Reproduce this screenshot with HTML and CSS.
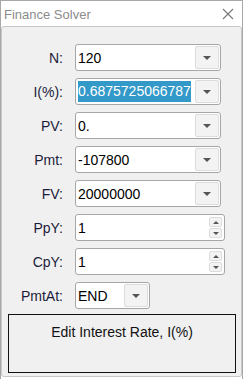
FILE: index.html
```html
<!DOCTYPE html>
<html>
<head>
<meta charset="utf-8">
<link rel="stylesheet" href="styles.css">
</head>
<body>
<div class="window">
  <div class="titlebar">
    <span class="title">Finance Solver</span>
    <svg class="close" width="12" height="12" viewBox="0 0 12 12"><path d="M1 1L11 11M11 1L1 11" stroke="#777" stroke-width="1.1" fill="none"/></svg>
  </div>
  <div class="panel">
    <div class="form">
      <label class="lbl">N:</label>
      <div class="combo"><span class="val">120</span><span class="btn"><i class="tri"></i></span></div>
      <label class="lbl">I(%):</label>
      <div class="combo"><span class="val"><span class="sel">0.6875725066787</span></span><span class="btn"><i class="tri"></i></span></div>
      <label class="lbl">PV:</label>
      <div class="combo"><span class="val">0.</span><span class="btn"><i class="tri"></i></span></div>
      <label class="lbl">Pmt:</label>
      <div class="combo"><span class="val">-107800</span><span class="btn"><i class="tri"></i></span></div>
      <label class="lbl">FV:</label>
      <div class="combo"><span class="val">20000000</span><span class="btn"><i class="tri"></i></span></div>
      <label class="lbl">PpY:</label>
      <div class="spin"><span class="val">1</span><span class="arrows"><span class="ab"><i class="up"></i></span><span class="ab"><i class="tri"></i></span></span></div>
      <label class="lbl">CpY:</label>
      <div class="spin"><span class="val">1</span><span class="arrows"><span class="ab"><i class="up"></i></span><span class="ab"><i class="tri"></i></span></span></div>
      <label class="lbl">PmtAt:</label>
      <div class="combo small"><span class="val">END</span><span class="btn"><i class="tri"></i></span></div>
    </div>
    <div class="status">Edit Interest Rate, I(%)</div>
  </div>
</div>
</body>
</html>
```
FILE: styles.css
```css
html, body {
  margin: 0;
  padding: 0;
  background: #ffffff;
}
body {
  font-family: "Liberation Sans", Arial, sans-serif;
  font-size: 14px;
  color: #000;
}
.window {
  width: 243px;
  height: 379px;
  box-sizing: border-box;
  border-top: 1px solid #a8a8a8;
  border-left: 1px solid #a8a8a8;
  border-right: 1px solid #a8a8a8;
  display: flex;
  flex-direction: column;
}
.titlebar {
  height: 25px;
  display: flex;
  align-items: center;
  justify-content: space-between;
  padding: 0 8px 0 3px;
  flex: none;
}
.title {
  color: #8c8c8c;
  font-size: 13px;
  padding-top: 1px;
}
.close {
  display: block;
  margin-top: 1px;
}
.panel {
  background: #f0f0f0;
  border: 1px solid #c8c8c8;
  border-radius: 3px;
  margin: 0 0 2px 0;
  height: 351px;
  box-sizing: border-box;
  padding: 17px 5px 3px 6px;
  display: flex;
  flex-direction: column;
}
.form {
  display: grid;
  grid-template-columns: 55px auto;
  column-gap: 12px;
  row-gap: 7px;
  align-items: center;
  justify-items: start;
}
.lbl {
  justify-self: end;
  color: #1c1c3a;
}
.combo, .spin {
  height: 27px;
  box-sizing: border-box;
  border: 1px solid #a6a6a6;
  border-radius: 3px;
  background: #fff;
  display: flex;
  align-items: stretch;
  width: 146px;
}
.spin {
  width: 150px;
}
.combo.small {
  width: 75px;
}
.val {
  flex: 1;
  display: flex;
  align-items: center;
  padding-left: 2px;
  overflow: hidden;
  white-space: nowrap;
}
.sel {
  background: #3399c9;
  color: #fff;
  height: 21px;
  line-height: 21px;
  display: block;
}
.btn {
  width: 22px;
  margin: 1px 1px 1px 0;
  background: #f3f3f3;
  border: 1px solid #dcdcdc;
  border-radius: 2px;
  display: flex;
  align-items: center;
  justify-content: center;
}
.tri {
  width: 0;
  height: 0;
  border-left: 4px solid transparent;
  border-right: 4px solid transparent;
  border-top: 4px solid #555;
}
.up {
  width: 0;
  height: 0;
  border-left: 3px solid transparent;
  border-right: 3px solid transparent;
  border-bottom: 3px solid #555;
}
.ab .tri {
  border-left-width: 3px;
  border-right-width: 3px;
  border-top-width: 3px;
}
.arrows {
  width: 13px;
  margin: 2px 2px 2px 0;
  display: flex;
  flex-direction: column;
  gap: 1px;
}
.ab {
  flex: 1;
  background: #f3f3f3;
  border: 1px solid #dcdcdc;
  border-radius: 2px;
  display: flex;
  align-items: center;
  justify-content: center;
}
.status {
  margin-top: 5px;
  flex: 1;
  border: 1px solid #111;
  text-align: center;
  padding-top: 9px;
  color: #111;
}
```
